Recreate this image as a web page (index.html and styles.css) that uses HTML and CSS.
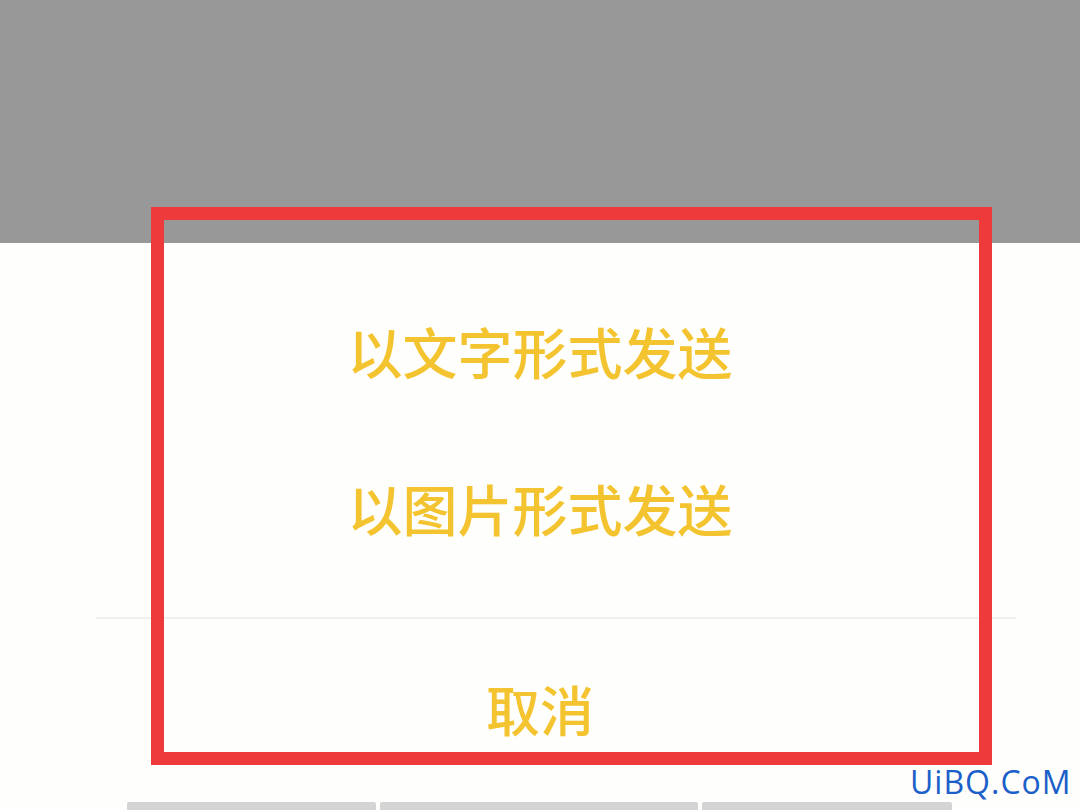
FILE: index.html
```html
<!DOCTYPE html>
<html lang="zh-CN">
    <head>
        <meta charset="UTF-8" />
        <meta name="viewport" content="width=device-width, initial-scale=1.0" />
        <title>发送方式</title>
        <link rel="stylesheet" href="styles.css">
    </head>
    <body>
        <div class="screen">
            <div class="mask"></div>
            <div class="sheet">
                <div class="option">以文字形式发送</div>
                <div class="option">以图片形式发送</div>
                <hr class="divider" />
                <div class="option cancel">取消</div>
            </div>
            <div class="tabbar">
                <span class="tab tab-1"></span>
                <span class="tab tab-2"></span>
                <span class="tab tab-3"></span>
            </div>
            <div class="frame"></div>
            <div class="watermark">UiBQ.CoM</div>
        </div>
    </body>
</html>
```

FILE: styles.css
```css
body {
    margin: 0;
    padding: 0;
    background-color: #fefefc;
    font-family: "Noto Sans CJK SC", "Noto Sans", sans-serif;
}
.screen {
    position: relative;
    width: 1080px;
    height: 810px;
    overflow: hidden;
    display: flex;
    flex-direction: column;
    background-color: #fefefc;
}
.mask {
    height: 243px;
    background-color: #989898;
    flex-shrink: 0;
}
.sheet {
    flex: 1;
    display: flex;
    flex-direction: column;
    padding-top: 29px;
}
.option {
    height: 157px;
    line-height: 157px;
    text-align: center;
    font-size: 55px;
    font-weight: 500;
    color: #f4c430;
}
.divider {
    margin: 31px 64px 0 96px;
    border: none;
    border-top: 2px solid #f0f0ee;
}
.cancel {
    height: 180px;
    line-height: 180px;
    font-size: 54px;
}
.tabbar {
    position: absolute;
    left: 0;
    right: 0;
    bottom: 0;
    height: 8px;
    display: flex;
    padding-left: 127px;
    gap: 4px;
}
.tab {
    display: block;
    height: 8px;
    background-color: #d4d4d4;
    border-radius: 2px 2px 0 0;
}
.tab-1 {
    width: 249px;
}
.tab-2 {
    width: 318px;
}
.tab-3 {
    width: 250px;
}
.frame {
    position: absolute;
    left: 151px;
    top: 207px;
    width: 815px;
    height: 532px;
    border: 13px solid #ee3a3a;
}
.watermark {
    position: absolute;
    left: 910px;
    top: 760px;
    font-family: "Open Sans", sans-serif;
    font-size: 32px;
    letter-spacing: 1px;
    color: #1b5fc9;
}
```
